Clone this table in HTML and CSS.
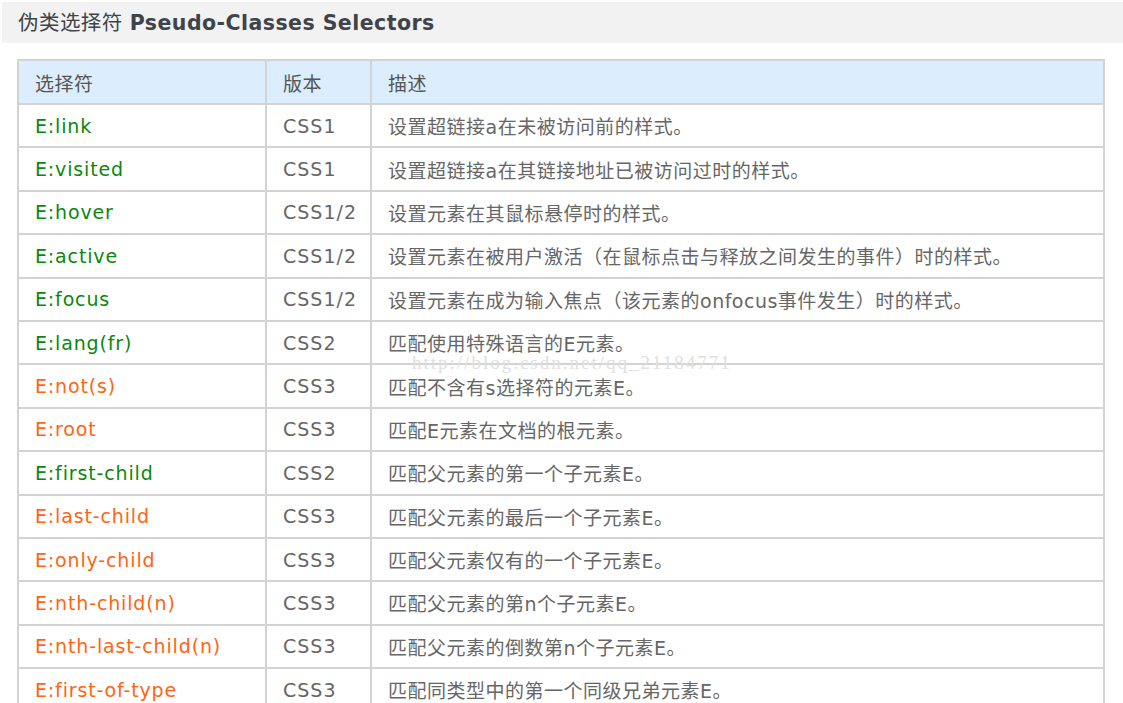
FILE: index.html
```html
<!DOCTYPE html>
<html lang="zh">
<head>
<meta charset="utf-8">
<link rel="stylesheet" href="styles.css">
</head>
<body>
<h2 class="title">伪类选择符 <b>Pseudo-Classes Selectors</b></h2>
<div class="wrap">
<table class="tbl">
<thead>
<tr><th class="c1">选择符</th><th class="c2">版本</th><th>描述</th></tr>
</thead>
<tbody>
<tr><td class="g">E:link</td><td class="v">CSS1</td><td>设置超链接a在未被访问前的样式。</td></tr>
<tr><td class="g">E:visited</td><td class="v">CSS1</td><td>设置超链接a在其链接地址已被访问过时的样式。</td></tr>
<tr><td class="g">E:hover</td><td class="v">CSS1/2</td><td>设置元素在其鼠标悬停时的样式。</td></tr>
<tr><td class="g">E:active</td><td class="v">CSS1/2</td><td>设置元素在被用户激活（在鼠标点击与释放之间发生的事件）时的样式。</td></tr>
<tr><td class="g">E:focus</td><td class="v">CSS1/2</td><td>设置元素在成为输入焦点（该元素的onfocus事件发生）时的样式。</td></tr>
<tr><td class="g">E:lang(fr)</td><td class="v">CSS2</td><td>匹配使用特殊语言的E元素。</td></tr>
<tr><td class="o">E:not(s)</td><td class="v">CSS3</td><td>匹配不含有s选择符的元素E。</td></tr>
<tr><td class="o">E:root</td><td class="v">CSS3</td><td>匹配E元素在文档的根元素。</td></tr>
<tr><td class="g">E:first-child</td><td class="v">CSS2</td><td>匹配父元素的第一个子元素E。</td></tr>
<tr><td class="o">E:last-child</td><td class="v">CSS3</td><td>匹配父元素的最后一个子元素E。</td></tr>
<tr><td class="o">E:only-child</td><td class="v">CSS3</td><td>匹配父元素仅有的一个子元素E。</td></tr>
<tr><td class="o">E:nth-child(n)</td><td class="v">CSS3</td><td>匹配父元素的第n个子元素E。</td></tr>
<tr><td class="o">E:nth-last-child(n)</td><td class="v">CSS3</td><td>匹配父元素的倒数第n个子元素E。</td></tr>
<tr><td class="o">E:first-of-type</td><td class="v">CSS3</td><td>匹配同类型中的第一个同级兄弟元素E。</td></tr>
</tbody>
</table>
<span class="mark">http://blog.csdn.net/qq_21184771</span>
</div>
</body>
</html>
```

FILE: styles.css
```css
html, body {
  margin: 0;
  padding: 0;
  background: #fff;
  overflow: hidden;
}
body {
  padding: 2px 0 0 2px;
  font-family: "DejaVu Sans", "Noto Sans CJK SC", sans-serif;
  color: #666;
}
.title {
  margin: 0;
  height: 41px;
  line-height: 42px;
  padding-left: 16px;
  background: #f2f2f2;
  font-size: 20.5px;
  letter-spacing: 0.45px;
  font-weight: normal;
  color: #3e4449;
}
.title b {
  font-weight: bold;
  color: #3e4449;
}
.wrap {
  position: relative;
  margin: 16px 0 0 15px;
  width: 1088px;
}
.tbl {
  border-collapse: collapse;
  width: 1088px;
  table-layout: fixed;
  font-size: 19px;
  letter-spacing: 0.5px;
}
.tbl th, .tbl td {
  border: 2px solid #d3d3d3;
  text-align: left;
  padding: 0 0 0 16px;
  white-space: nowrap;
  overflow: hidden;
  height: 41.4px;
}
.tbl th {
  background: #dcedfd;
  font-weight: normal;
  color: #555;
  height: 42px;
}
.c1 { width: 230px; }
.c2 { width: 87px; }
.g { color: #0b870b; letter-spacing: 0.85px; }
.o { color: #ff6410; letter-spacing: 0.85px; }
.v { letter-spacing: 1px; }
.mark {
  position: absolute;
  left: 395px;
  top: 293px;
  font-family: "Liberation Serif", serif;
  font-size: 19px;
  letter-spacing: 2px;
  color: #e0e0e0;
  pointer-events: none;
}
```
